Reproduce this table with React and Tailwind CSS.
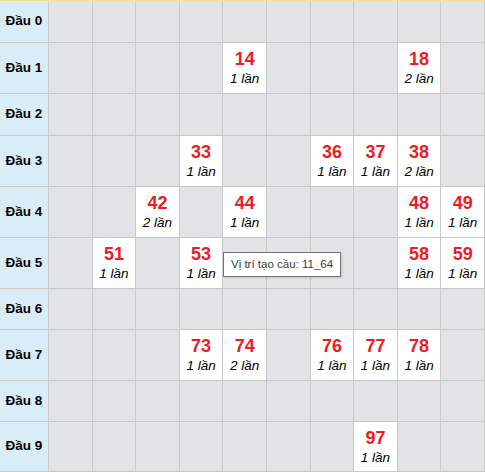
const rows = [
  { label: 'Đầu 0', h: 'h-[41px]', cells: {} },
  { label: 'Đầu 1', h: 'h-[50px]', cells: { 4: ['14', 1], 8: ['18', 2] } },
  { label: 'Đầu 2', h: 'h-[41px]', cells: {} },
  { label: 'Đầu 3', h: 'h-[50px]', cells: { 3: ['33', 1], 6: ['36', 1], 7: ['37', 1], 8: ['38', 2] } },
  { label: 'Đầu 4', h: 'h-[50px]', cells: { 2: ['42', 2], 4: ['44', 1], 8: ['48', 1], 9: ['49', 1] } },
  { label: 'Đầu 5', h: 'h-[50px]', cells: { 1: ['51', 1], 3: ['53', 1], 8: ['58', 1], 9: ['59', 1] } },
  { label: 'Đầu 6', h: 'h-[40px]', cells: {} },
  { label: 'Đầu 7', h: 'h-[50px]', cells: { 3: ['73', 1], 4: ['74', 2], 6: ['76', 1], 7: ['77', 1], 8: ['78', 1] } },
  { label: 'Đầu 8', h: 'h-[40px]', cells: {} },
  { label: 'Đầu 9', h: 'h-[49px]', cells: { 7: ['97', 1] } },
];

const cols = [0, 1, 2, 3, 4, 5, 6, 7, 8, 9];

function Cell({ hit }) {
  if (!hit) return <div className="bg-[#e2e3e5]" />;
  const [num, times] = hit;
  return (
    <div className="flex flex-col items-center justify-center bg-white pt-px">
      <span className="text-[18px] font-bold leading-[21px] text-[#ed1c24]">{num}</span>
      <span className="text-[13.5px] italic leading-[18px] text-black">{times} lần</span>
    </div>
  );
}

export default function App() {
  return (
    <div className="relative w-[485px] bg-white font-['Liberation_Sans',Arial,sans-serif]">
      <div className="h-px bg-[#f5dd9c]" />
      <div className="grid grid-cols-[48px_repeat(10,1fr)] gap-px bg-[#c9c9c9] pr-px pb-px">
        {rows.map((row) => (
          <div key={row.label} className={`col-span-11 grid grid-cols-subgrid ${row.h}`}>
            <div className="flex items-center justify-center bg-[#d9edf8] text-[13.5px] font-bold text-black">
              {row.label}
            </div>
            {cols.map((c) => (
              <Cell key={c} hit={row.cells[c]} />
            ))}
          </div>
        ))}
      </div>

      {/* native title tooltip over cell 53 */}
      <div className="absolute left-[223px] top-[252px] flex h-[25px] items-center border border-[#767676] bg-white px-[7px] text-[11.5px] text-[#3a3a3a] shadow-[1px_1px_2px_rgba(0,0,0,0.15)]">
        Vị trí tạo cầu: 11_64
      </div>
    </div>
  );
}
